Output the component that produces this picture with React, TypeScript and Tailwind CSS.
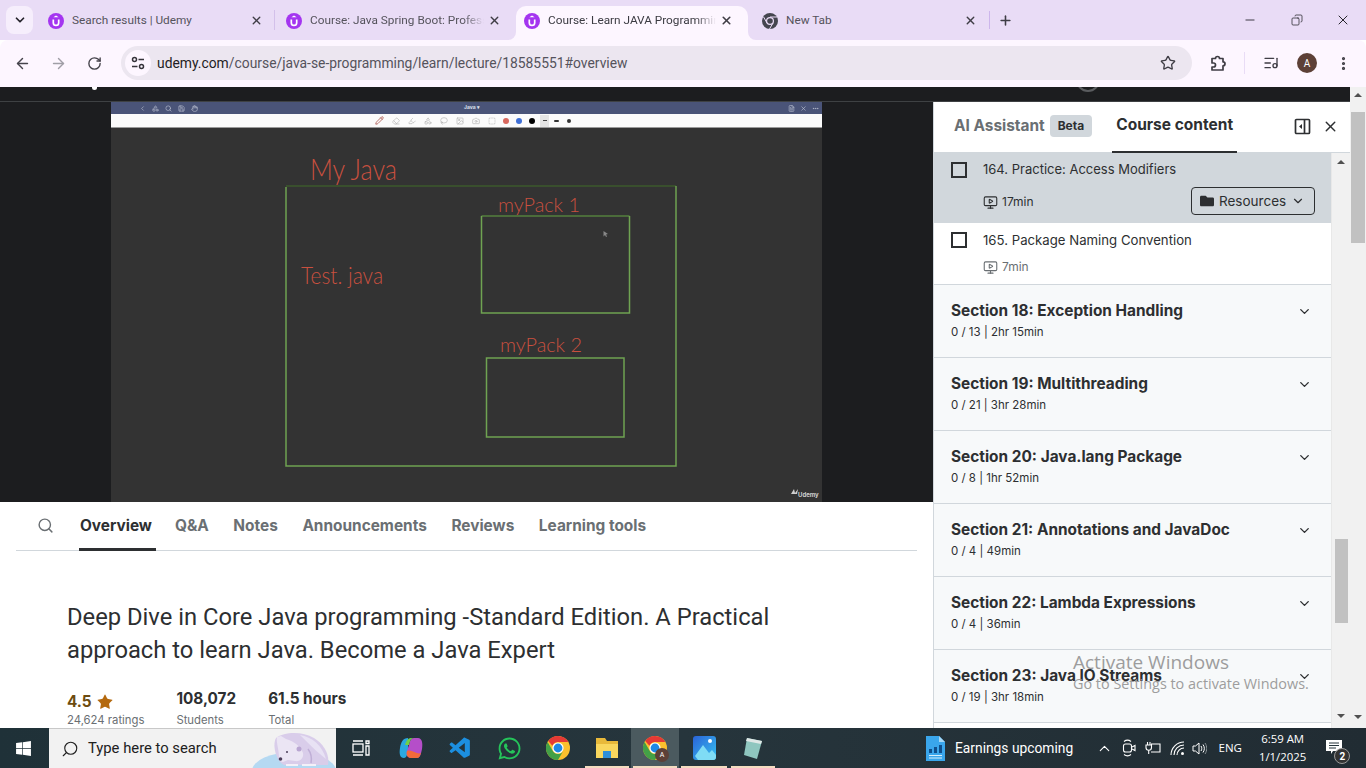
import { ArrowLeft, ArrowRight, ChevronDown, ChevronUp, Copy, Minus, MoreVertical, Plus, RotateCw, Search, Star, X, MonitorPlay, ListMusic, Camera, Eraser, Pencil, Highlighter, Lasso, Image, ChevronLeft, FileText, Ellipsis, Shapes, Save, Hand, SquareDashed } from "lucide-react";
import { FaWindows, FaWhatsapp, FaFolder } from "react-icons/fa";
import { VscVscode } from "react-icons/vsc";

const UdemyIcon = () => (
  <svg width="16" height="16" viewBox="0 0 16 16" className="shrink-0">
    <circle cx="8" cy="8" r="8" fill="#a435f0" />
    <path d="M5.300 6.500v3.200a2.700 2.700 0 0 0 5.400 0V6.500" fill="none" stroke="#fff" strokeWidth="1.700" />
    <path d="M8 2.600 10.600 4.200H5.400z" fill="#fff" />
  </svg>
);

const ChromeIcon = ({ size = 24 }: { size?: number }) => (
  <svg width={size} height={size} viewBox="0 0 24 24" className="shrink-0">
    <circle cx="12" cy="12" r="12" fill="#fbc02d" />
    <path d="M12 0a12 12 0 0 1 10.400 6H12a6 6 0 0 0-5.600 3.800L2.200 5A12 12 0 0 1 12 0z" fill="#e53935" />
    <path d="M1.600 6A12 12 0 0 0 12 24l5.200-9a6 6 0 0 1-10.400 0z" fill="#43a047" />
    <circle cx="12" cy="12" r="5.600" fill="#fff" />
    <circle cx="12" cy="12" r="4.400" fill="#1e88e5" />
  </svg>
);

const GreyChrome = () => (
  <svg width="16" height="16" viewBox="0 0 16 16" className="shrink-0">
    <circle cx="8" cy="8" r="8" fill="#45464f" />
    <circle cx="8" cy="8" r="4" fill="#ebdcf7" />
    <circle cx="8" cy="8" r="2.800" fill="#45464f" />
    <path d="M8 4h7M5 10 1.600 4M11 10l-3.500 6" stroke="#ebdcf7" strokeWidth="1" />
  </svg>
);

const Tab = ({ title, icon, active, fade, sep }: { title: string; icon: React.ReactNode; active?: boolean; fade?: boolean; sep?: boolean }) => (
  <div className={`relative flex h-[34px] shrink-0 items-center pb-[5px] pl-2 pr-[15px] ${active ? "mr-1.5 w-[232px] rounded-t-[10px] bg-[#fdf6ff]" : "w-[238px]"}`}>
    {active && (
      <>
        <div className="absolute -left-2 bottom-0 h-2 w-2 bg-[#fdf6ff]"><div className="h-2 w-2 rounded-br-[8px] bg-[#e9dcf6]" /></div>
        <div className="absolute -right-2 bottom-0 h-2 w-2 bg-[#fdf6ff]"><div className="h-2 w-2 rounded-bl-[8px] bg-[#e9dcf6]" /></div>
      </>
    )}
    {icon}
    <span className={`ml-2 min-w-0 flex-1 overflow-hidden whitespace-nowrap text-[11.800px] ${active ? "text-[#3b3b42]" : "text-[#55535c]"} ${fade ? "[mask-image:linear-gradient(90deg,#000_88%,transparent)]" : ""}`}>{title}</span>
    <X size={13} strokeWidth={active ? 3 : 2.5} className="ml-1 shrink-0 text-[#3f3d45]" />
    {sep && <div className="absolute right-[3px] top-[4px] h-[20px] w-px bg-[#d3c0ea]" />}
  </div>
);

const BrowserChrome = () => (
  <div className="shrink-0 [font-family:Roboto,sans-serif]">
    <div className="flex h-10 items-end bg-[#e9dcf6]">
      <div className="mb-[6px] ml-[6px] mr-[7px] flex h-7 w-[27px] items-center justify-center rounded-lg bg-[#f6eefc]">
        <ChevronDown size={14} strokeWidth={3} className="text-[#24222a]" />
      </div>
      <Tab title="Search results | Udemy" icon={<UdemyIcon />} sep />
      <Tab title="Course: Java Spring Boot: Professional" icon={<UdemyIcon />} fade />
      <Tab title="Course: Learn JAVA Programming" icon={<UdemyIcon />} active fade />
      <Tab title="New Tab" icon={<GreyChrome />} />
      <div className="-ml-[3px] mb-[6px] flex h-7 items-center gap-2">
        <div className="h-[18px] w-px bg-[#cdb6ec]" />
        <Plus size={15} strokeWidth={2.5} className="text-[#3f3d45]" />
      </div>
      <div className="ml-auto mb-[6px] flex h-7 items-center pr-[15px] text-[#26252b]">
        <Minus size={14} strokeWidth={1.5} />
        <Copy size={12} strokeWidth={1.5} className="ml-[34px] -scale-x-100" />
        <X size={16} strokeWidth={1.5} className="ml-[32px]" />
      </div>
    </div>
    <div className="flex h-[47px] items-center rounded-t-[8px] bg-[#fdf6ff] pb-[1px] text-[#45434b]">
      <ArrowLeft size={17} strokeWidth={2} className="ml-[14px]" />
      <ArrowRight size={17} strokeWidth={2} className="ml-[19px] text-[#a09ea6]" />
      <RotateCw size={15} strokeWidth={2.2} className="ml-[20px]" />
      <div className="ml-[19px] flex h-[34px] w-[1071px] items-center rounded-full bg-[#ece6f0] pl-1">
        <div className="flex h-[26px] w-[26px] items-center justify-center rounded-full bg-[#fdf6ff]">
          <svg width="14" height="14" viewBox="0 0 14 14" fill="none" stroke="#35333a" strokeWidth="1.500">
            <circle cx="3.500" cy="3.500" r="2" />
            <path d="M7.500 3.500H13M1 10.500h5.500" />
            <circle cx="10.500" cy="10.500" r="2" />
          </svg>
        </div>
        <span className="ml-[6px] text-[13.860px] text-[#55535c]">
          <span className="text-[#1f1d24]">udemy.com</span>/course/java-se-programming/learn/lecture/18585551#overview
        </span>
        <Star size={16} strokeWidth={2} className="ml-auto mr-4 text-[#3f3d45]" />
      </div>
      <svg width="18" height="18" viewBox="0 0 18 18" fill="none" stroke="#3f3d45" strokeWidth="1.700" className="ml-[17px]">
        <path d="M3 4.500h3.500a2 2 0 0 1 4 0H14v3.300a2 2 0 0 1 0 4V16H3v-3h1.500a2 2 0 0 0 0-4H3z" strokeLinejoin="round" />
      </svg>
      <div className="ml-[17px] h-[22px] w-px bg-[#e9dcf6]" />
      <ListMusic size={16} strokeWidth={2} className="ml-[18px] text-[#3f3d45]" />
      <div className="ml-[18px] flex h-5 w-5 items-center justify-center rounded-full bg-[#5d4037] text-[10px] text-white">A</div>
      <MoreVertical size={17} strokeWidth={2.5} className="ml-[18px] text-[#3f3d45]" />
    </div>
  </div>
);

const Whiteboard = () => (
  <div className="flex h-[400px] w-[711px] flex-col overflow-hidden bg-[#333333]">
    <div className="flex h-[12px] items-center bg-[#4a5478] text-[#c3c8d8]">
      <div className="ml-[28px] flex items-center gap-[6px]">
        <ChevronLeft size={7} />
        <Shapes size={7} />
        <Search size={7} />
        <Save size={7} />
        <Hand size={7} />
      </div>
      <span className="ml-[266px] text-[5px] font-bold text-[#dfe2ec]">Java ▾</span>
      <div className="ml-auto mr-[3px] flex items-center gap-[5px]">
        <FileText size={7} />
        <X size={7} />
        <Ellipsis size={7} />
      </div>
    </div>
    <div className="flex h-[14px] items-center border-b border-[#9a9a9a] bg-[#fbfbfb] text-[#b5b5b5]">
      <div className="ml-[264px] flex items-center gap-[8px]">
        <Pencil size={9} className="text-[#a5483f]" />
        <Eraser size={8} />
        <Highlighter size={8} />
        <Shapes size={8} />
        <Lasso size={8} />
        <Image size={8} />
        <Camera size={8} />
        <SquareDashed size={8} />
      </div>
      <div className="ml-[7px] h-[6px] w-[6px] rounded-full bg-[#d8685e]" />
      <div className="ml-[7px] h-[6px] w-[6px] rounded-full bg-[#3f6fd6]" />
      <div className="ml-[7px] h-[6px] w-[6px] rounded-full bg-black" />
      <div className="ml-[5px] flex h-3 w-[9px] items-center justify-center bg-[#e4e4e4]"><div className="h-px w-1 bg-[#444]" /></div>
      <div className="ml-[5px] h-[2px] w-[5px] rounded bg-[#333]" />
      <div className="ml-[8px] h-1 w-1 rounded-full bg-[#333]" />
    </div>
    <svg width="711" height="374" viewBox="0 0 711 374" className="block">
      <g fill="none" stroke="#6fa352" strokeWidth="1.500">
        <path d="M175 58H565" stroke="#3d5a2c" />
        <path d="M175 59V338H565V58" />
        <path d="M370.500 88H518.500" stroke="#55803e" />
        <path d="M370.500 88V185H518.500V88" />
        <path d="M375.500 230V309H513V230z" />
      </g>
      <g fill="#c9503f" fontFamily="Lato, sans-serif" fontWeight="300">
        <text x="199" y="52" fontSize="30" textLength="87" lengthAdjust="spacingAndGlyphs">My Java</text>
        <text x="387" y="84" fontSize="19" textLength="82" lengthAdjust="spacingAndGlyphs">myPack 1</text>
        <text x="389" y="224" fontSize="19" textLength="82" lengthAdjust="spacingAndGlyphs">myPack 2</text>
        <text x="190" y="156" fontSize="23" textLength="82" lengthAdjust="spacingAndGlyphs">Test. java</text>
      </g>
      <path d="M492.500 103l4.500 3-2 .6 1 2-1 .4-1-2-1.500 1.500z" fill="#888" />
      <text x="687" y="369" fontSize="6" fill="#d0d0d0" fontFamily="Inter, sans-serif" fontWeight="700">Udemy</text>
      <path d="M680 366l3-5 1 4 3-4-1 5z" fill="#d0d0d0" />
    </svg>
  </div>
);

const tabs = ["Notes", "Announcements", "Reviews", "Learning tools"];

const MainColumn = () => (
  <div className="flex w-[933px] shrink-0 flex-col">
    <div className="flex justify-center bg-[#1c1d1f]">
      <Whiteboard />
    </div>
    <div className="mx-4 flex h-[50px] items-end border-b border-[#d1d7dc] text-[15.400px] font-bold text-[#6a6f73]">
      <Search size={17} strokeWidth={2} className="mb-[16px] ml-[21px] text-[#6a6f73]" />
      <div className="-mb-px ml-[25px] border-b-[3px] border-[#2d2f31] pb-[11px] pl-px pr-1 text-[#2d2f31]">Overview</div>
      <div className="ml-[19px] pb-[13px]">Q&A</div>
      {tabs.map((t) => (
        <div key={t} className="ml-[24.600px] pb-[13px]">{t}</div>
      ))}
    </div>
    <div className="pl-[67px] pt-[50px] text-[#2d2f31]">
      <h1 className="w-[760px] text-[23.760px] font-normal leading-[33px] [font-family:Roboto,sans-serif]">
        Deep Dive in Core Java programming -Standard Edition. A Practical approach to learn Java. Become a Java Expert
      </h1>
      <div className="mt-[21px] flex">
        <div>
          <div className="flex items-center pt-[4px] text-[15.300px] font-bold leading-5 text-[#6d4c10]">
            4.5
            <Star size={18} fill="#b4690e" strokeWidth={0} className="ml-1" />
          </div>
          <div className="text-[11.300px] leading-4 text-[#6a6f73]">24,624 ratings</div>
        </div>
        <div className="ml-8">
          <div className="mt-px text-[15.300px] font-bold leading-5">108,072</div>
          <div className="mt-[3px] text-[11.300px] leading-4 text-[#6a6f73]">Students</div>
        </div>
        <div className="ml-8">
          <div className="mt-px text-[15.300px] font-bold leading-5">61.5 hours</div>
          <div className="mt-[3px] text-[11.300px] leading-4 text-[#6a6f73]">Total</div>
        </div>
      </div>
    </div>
  </div>
);

const sections = [
  ["Section 18: Exception Handling", "0 / 13 | 2hr 15min"],
  ["Section 19: Multithreading", "0 / 21 | 3hr 28min"],
  ["Section 20: Java.lang Package", "0 / 8 | 1hr 52min"],
  ["Section 21: Annotations and JavaDoc", "0 / 4 | 49min"],
  ["Section 22: Lambda Expressions", "0 / 4 | 36min"],
  ["Section 23: Java IO Streams", "0 / 19 | 3hr 18min"],
];

const Checkbox = () => <div className="mt-[9px] h-4 w-4 shrink-0 border-2 border-[#2d2f31]" />;

const Sidebar = () => (
  <div className="flex min-w-0 flex-1 flex-col border-l border-[#d1d7dc] bg-white">
    <div className="flex h-[51px] shrink-0 items-center border-b border-[#d1d7dc] pl-5">
      <span className="-mt-[3px] text-[15.400px] font-bold text-[#6a6f73]">AI Assistant</span>
      <span className="-mt-[3px] ml-[5px] rounded bg-[#d1d7dc] px-2 py-[3px] text-[12px] font-bold leading-4 text-[#2d2f31]">Beta</span>
      <div className="ml-5 -mb-px flex h-[51px] items-center border-b-[2px] border-[#2d2f31] px-1 pb-[3px] text-[15.500px] font-bold text-[#2d2f31]">Course content</div>
      <svg width="17" height="17" viewBox="0 0 17 17" fill="none" stroke="#2d2f31" strokeWidth="1.700" className="-mt-[1px] ml-[57px]">
        <rect x="1.500" y="1.500" width="14" height="14" rx="1" />
        <path d="M10.500 2v13" />
        <path d="M8 6v5L5 8.500z" fill="#2d2f31" strokeWidth="0" />
      </svg>
      <X size={17} strokeWidth={2} className="-mt-[1px] ml-[11px] text-[#2d2f31]" />
    </div>
    <div className="flex min-h-0 flex-1 overflow-hidden">
      <div className="w-[397px] shrink-0">
        <div className="flex h-[70px] bg-[#d1d7dc] pl-[17px]">
          <Checkbox />
          <div className="ml-[16px] flex-1">
            <div className="mt-[7px] text-[13px] leading-[18px] text-[#2d2f31]">164. Practice: Access Modifiers</div>
            <div className="flex items-center text-[#2d2f31]">
              <MonitorPlay size={15} strokeWidth={1.75} className="mt-[11px]" />
              <span className="ml-1 mt-[11px] text-[12px]">17min</span>
              <div className="ml-auto mr-[16px] mt-[9px] flex h-7 w-[124px] items-center rounded border border-[#2d2f31] pl-2 text-[13.500px]">
                <FaFolder size={14} />
                <span className="ml-[5px]">Resources</span>
                <ChevronDown size={14} strokeWidth={2} className="ml-[5px]" />
              </div>
            </div>
          </div>
        </div>
        <div className="flex h-[62px] border-b border-[#d1d7dc] pl-[17px]">
          <Checkbox />
          <div className="ml-[16px] flex-1">
            <div className="mt-[8px] text-[13.200px] leading-[18px] text-[#2d2f31]">165. Package Naming Convention</div>
            <div className="mt-[9px] flex items-center text-[#6a6f73]">
              <MonitorPlay size={15} strokeWidth={1.75} />
              <span className="ml-1 text-[12px]">7min</span>
            </div>
          </div>
        </div>
        {sections.map(([title, meta]) => (
          <div key={title} className="flex h-[73px] items-start border-b border-[#d1d7dc] bg-[#f7f9fa] pl-[17px] pr-[19px] pt-[16px]">
            <div className="flex-1">
              <div className="text-[15.400px] font-bold leading-[20px] text-[#2d2f31]">{title}</div>
              <div className="mt-[2px] text-[11.500px] leading-[18px] text-[#2d2f31]">{meta}</div>
            </div>
            <ChevronDown size={15} strokeWidth={2.2} className="mt-[3px] text-[#2d2f31]" />
          </div>
        ))}
      </div>
      <div className="flex w-[19px] flex-col items-center border-l border-[#e8e8e8] bg-[#f1f1f1] px-[2px]">
        <div className="mt-[7px] h-0 w-0 border-x-[4px] border-b-[4px] border-x-transparent border-b-[#505050]" />
        <div className="mt-[375px] h-[84px] w-[13px] bg-[#c1c1c1]" />
        <div className="mt-[91px] h-0 w-0 border-x-[4px] border-t-[4px] border-x-transparent border-t-[#505050]" />
      </div>
    </div>
  </div>
);

const PageScrollbar = () => (
  <div className="flex w-4 shrink-0 flex-col items-center bg-[#f1f1f1] pt-[6px]">
    <div className="h-0 w-0 border-x-[4px] border-b-[4px] border-x-transparent border-b-[#505050]" />
    <div className="mt-[15px] h-[131px] w-[14px] bg-[#c1c1c1]" />
    <div className="mt-[472px] h-0 w-0 border-x-[4px] border-t-[4px] border-x-transparent border-t-[#505050]" />
  </div>
);

const Underline = () => <div className="absolute bottom-0 left-[2px] right-[2px] h-[2px] bg-[#f3dcc0]" />;

const Taskbar = () => (
  <div className="flex h-10 shrink-0 items-center bg-gradient-to-r from-[#1f3138] via-[#26353c] to-[#212c33] text-white [font-family:Roboto,sans-serif]">
    <FaWindows size={17} className="ml-[15px] shrink-0 text-white" />
    <div className="relative ml-[17px] flex h-10 w-[287px] shrink-0 items-center overflow-hidden border-t border-[#c8c8c8] bg-[#f2f2f2] text-[#202020]">
      <Search size={18} strokeWidth={1.5} className="ml-[12px] -scale-x-100" />
      <span className="ml-[9px] text-[14.800px]">Type here to search</span>
      <svg width="86" height="40" viewBox="0 0 86 40" className="absolute right-0 top-0">
        <ellipse cx="44" cy="42" rx="42" ry="19" fill="#b5d9f2" />
        <path d="M26 9C34 3 52 2 64 9 74 15 80 26 78 36H34C26 32 22 16 26 9z" fill="#d9cdea" />
        <path d="M50 6C62 8 72 16 76 30 68 24 58 14 50 6z" fill="#e8e2f4" />
        <path d="M27 8l4-1 5 3c8 2 15 8 17 14 1 5-3 9-8 8l-7-1-5 2c-3 0-4-3-4-5 0-8-3-14-2-20z" fill="#ebe5f4" />
        <circle cx="49" cy="20" r="2.500" fill="#b9a6d2" />
        <circle cx="30.500" cy="30" r="1.800" fill="#4a3c58" />
        <circle cx="37" cy="23" r="1" fill="#4a3c58" />
        <path d="M36 35h12v2H36zM52 35h14v2H52z" fill="#f4f1f8" />
        <path d="M58 20c3 4 4 9 3 14" fill="none" stroke="#bfaed6" strokeWidth="1.500" />
      </svg>
    </div>
    <div className="ml-[15px] flex h-10 items-center">
      <svg width="20" height="20" viewBox="0 0 20 20" fill="none" stroke="#fff" strokeWidth="1.300">
        <path d="M2 3h10M2 17h10" />
        <rect x="2" y="6" width="10" height="8" />
        <path d="M15 3h3v2.500h-3zM15 8h3v9h-3z" />
      </svg>
      <svg width="24" height="24" viewBox="0 0 24 24" className="ml-[28px]">
        <path d="M9 2C4 2 2 6 1 12c-1 6 0 10 4 10 3 0 3-4 4-7z" fill="#2aa8e0" />
        <path d="M15 2c-4 0-4 4-5 7l-2 6c-1 3 0 7 4 7h6c3 0 4-4 5-9 1-6 0-11-4-11z" fill="#b54ec9" />
        <path d="M8 15c-1 3 0 7 4 7h6c2 0 3-2 4-5-4 2-9-4-14-2z" fill="#f36a3a" />
        <path d="M10 9c1-3 1-7 5-7h-3c-3 0-5 3-6 7z" fill="#6fd04a" />
      </svg>
      <VscVscode size={25} className="ml-[25px] text-[#1c8fe0]" />
      <FaWhatsapp size={25} className="ml-[24px] text-[#25c45a]" />
      <span className="ml-[24px]"><ChromeIcon /></span>
      <div className="relative ml-[13px] flex h-10 w-[48px] items-center justify-center">
        <svg width="24" height="22" viewBox="0 0 24 22">
          <path d="M1 1h9l2 3h11v17H1z" fill="#e8b93a" />
          <path d="M1 7h22v14H1z" fill="#f9d75e" />
          <path d="M8 14h8v7H8z" fill="#2f8fd8" />
        </svg>
        <Underline />
      </div>
      <div className="relative flex h-10 w-[48px] items-center justify-center bg-[#4b5a5f]">
        <ChromeIcon />
        <div className="absolute bottom-[6px] right-[10px] flex h-[14px] w-[14px] items-center justify-center rounded-full bg-[#5d4037] text-[7px]">A</div>
        <Underline />
      </div>
      <div className="relative flex h-10 w-[50px] items-center justify-center">
        <svg width="23" height="24" viewBox="0 0 23 24">
          <defs>
            <linearGradient id="photos" x1="0" y1="0" x2="1" y2="1">
              <stop offset="0" stopColor="#2a63d8" />
              <stop offset="1" stopColor="#38c2ef" />
            </linearGradient>
          </defs>
          <rect width="23" height="24" rx="3" fill="url(#photos)" />
          <path d="M2 20 10 9l6 8 3-3 4 5v2a3 3 0 0 1-3 3H5z" fill="#7fdcf5" />
          <circle cx="17" cy="5" r="2" fill="#fff" />
        </svg>
        <Underline />
      </div>
      <div className="relative flex h-10 w-[48px] items-center justify-center">
        <svg width="24" height="24" viewBox="0 0 24 24">
          <path d="M6 2l15 3-5 18-13-4z" fill="#8fc6bf" />
          <path d="M6 2l15 3-1 3-15-3z" fill="#dfe7e6" />
        </svg>
        <Underline />
      </div>
    </div>
    <svg width="19" height="25" viewBox="0 0 19 25" className="ml-[149px] shrink-0">
      <path d="M0 0h13l6 6v19H0z" fill="#3aa6ec" />
      <path d="M13 0l6 6h-6z" fill="#a5d8f7" />
      <path d="M3 13h3v4H3zM8 11h3v6H8zM13 9h3v8h-3z" fill="#0f4f8c" />
      <path d="M3 19h13v1H3zM3 21.500h13v1H3z" fill="#d8effc" />
    </svg>
    <span className="ml-[10px] w-[118px] shrink-0 whitespace-nowrap text-[13.800px]">Earnings upcoming</span>
    <ChevronUp size={17} strokeWidth={1.5} className="ml-[23px] shrink-0" />
    <svg width="14" height="18" viewBox="0 0 14 18" fill="none" stroke="#fff" strokeWidth="1.100" className="ml-[8.500px] shrink-0">
      <path d="M2 2.500c2-1.500 5-1.500 7 0M2 15.500c2 1.500 5 1.500 7 0" />
      <rect x="1.500" y="5" width="8" height="8" rx="2" />
      <path d="M10 8l3-1.500v5L10 10" />
    </svg>
    <svg width="16" height="14" viewBox="0 0 16 14" fill="none" stroke="#fff" strokeWidth="1.100" className="ml-[9px] shrink-0">
      <path d="M6 3h9v8H6M2.500 1v3M5 1v3M1 4h5.500v2.500a2.700 2.700 0 0 1-5.500 0zM3.700 9v4" />
    </svg>
    <svg width="16" height="15" viewBox="0 0 16 15" fill="none" stroke="#fff" strokeWidth="1.100" className="ml-[9px] shrink-0">
      <path d="M1 14A13 13 0 0 1 14 1M4 14A10 10 0 0 1 14 4M7 14a7 7 0 0 1 7-7" />
      <circle cx="12.500" cy="12.500" r="1.500" fill="#fff" stroke="none" />
    </svg>
    <svg width="15" height="15" viewBox="0 0 15 15" fill="none" stroke="#fff" strokeWidth="1" className="ml-[6.500px] shrink-0">
      <path d="M1 5h2.500L7 2v11L3.500 10H1z" />
      <path d="M9 5c1 1.500 1 3.500 0 5M11 3.500c1.800 2.500 1.800 5.500 0 8" />
      <path d="M13 2c2.300 3.300 2.300 7.700 0 11" stroke="#8a9296" />
    </svg>
    <span className="ml-[11.500px] text-[11.500px] [font-family:'Open_Sans',sans-serif]">ENG</span>
    <div className="ml-[17px] flex flex-col items-center text-[11.400px] leading-[18px] [font-family:'Open_Sans',sans-serif]">
      <span>6:59 AM</span>
      <span>1/1/2025</span>
    </div>
    <div className="relative ml-[20px]">
      <svg width="16" height="16" viewBox="0 0 16 16" className="block">
        <path d="M0 0h16v11H7l-2 3v-3H0z" fill="#fff" />
        <path d="M3 3h10M3 5.500h10M3 8h7" stroke="#26353c" strokeWidth="1" />
      </svg>
      <div className="absolute -bottom-[8px] -right-[8px] flex h-4 w-4 items-center justify-center rounded-full border border-[#9a9a9a] bg-[#333] text-[10px] font-bold">2</div>
    </div>
  </div>
);

export default function App() {
  return (
    <div className="relative flex h-[768px] w-[1366px] flex-col overflow-hidden bg-white [font-family:Inter,sans-serif]">
      <BrowserChrome />
      <div className="flex min-h-0 flex-1">
        <div className="flex min-w-0 flex-1 flex-col">
          <div className="relative h-[15px] shrink-0 overflow-hidden border-b border-[#3e4143] bg-[#1c1d1f]">
            <div className="absolute left-[92px] top-0 h-[3px] w-[5px] rounded-b-sm bg-white" />
            <div className="absolute -top-[19px] left-[1076px] h-6 w-6 rounded-full border-2 border-[#5a5c5f]" />
          </div>
          <div className="flex min-h-0 flex-1">
            <MainColumn />
            <Sidebar />
          </div>
        </div>
        <PageScrollbar />
      </div>
      <Taskbar />
      <div className="pointer-events-none absolute left-[1073px] top-[650px] text-[#9d9d9d] [font-family:'Open_Sans',sans-serif]">
        <div className="text-[19px] leading-6">Activate Windows</div>
        <div className="text-[14.400px] leading-[20px]">Go to Settings to activate Windows.</div>
      </div>
    </div>
  );
}
